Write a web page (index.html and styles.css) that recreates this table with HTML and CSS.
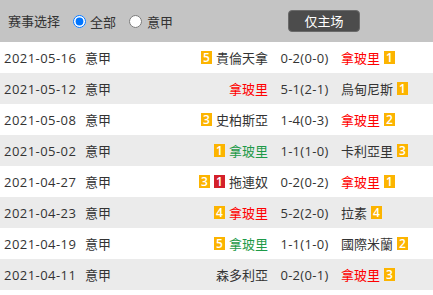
FILE: index.html
```html
<!DOCTYPE html>
<html>
<head>
<meta charset="utf-8">
<link rel="stylesheet" href="styles.css">
</head>
<body>
<div class="header">
  <span class="title">赛事选择</span>
  <input type="radio" name="lg" class="radio first" checked>
  <span class="opt">全部</span>
  <input type="radio" name="lg" class="radio">
  <span class="opt">意甲</span>
  <button class="btn">仅主场</button>
</div>
<div class="list">
  <div class="row">
    <span class="date">2021-05-16</span><span class="lg">意甲</span>
    <span class="home"><i class="b">5</i>貴倫天拿</span>
    <span class="score">0-2(0-0)</span>
    <span class="away"><em class="red">拿玻里</em><i class="b">1</i></span>
  </div>
  <div class="row alt">
    <span class="date">2021-05-12</span><span class="lg">意甲</span>
    <span class="home"><em class="red">拿玻里</em></span>
    <span class="score">5-1(2-1)</span>
    <span class="away">烏甸尼斯<i class="b">1</i></span>
  </div>
  <div class="row">
    <span class="date">2021-05-08</span><span class="lg">意甲</span>
    <span class="home"><i class="b">3</i>史柏斯亞</span>
    <span class="score">1-4(0-3)</span>
    <span class="away"><em class="red">拿玻里</em><i class="b">2</i></span>
  </div>
  <div class="row alt">
    <span class="date">2021-05-02</span><span class="lg">意甲</span>
    <span class="home"><i class="b">1</i><em class="green">拿玻里</em></span>
    <span class="score">1-1(1-0)</span>
    <span class="away">卡利亞里<i class="b">3</i></span>
  </div>
  <div class="row">
    <span class="date">2021-04-27</span><span class="lg">意甲</span>
    <span class="home"><i class="b">3</i><i class="b rc">1</i>拖連奴</span>
    <span class="score">0-2(0-2)</span>
    <span class="away"><em class="red">拿玻里</em><i class="b">1</i></span>
  </div>
  <div class="row alt">
    <span class="date">2021-04-23</span><span class="lg">意甲</span>
    <span class="home"><i class="b">4</i><em class="red">拿玻里</em></span>
    <span class="score">5-2(2-0)</span>
    <span class="away">拉素<i class="b">4</i></span>
  </div>
  <div class="row">
    <span class="date">2021-04-19</span><span class="lg">意甲</span>
    <span class="home"><i class="b">5</i><em class="green">拿玻里</em></span>
    <span class="score">1-1(1-0)</span>
    <span class="away">國際米蘭<i class="b">2</i></span>
  </div>
  <div class="row alt">
    <span class="date">2021-04-11</span><span class="lg">意甲</span>
    <span class="home">森多利亞</span>
    <span class="score">0-2(0-1)</span>
    <span class="away"><em class="red">拿玻里</em><i class="b">3</i></span>
  </div>
</div>
</body>
</html>
```
FILE: styles.css
```css
html, body {
  margin: 0;
  padding: 0;
  background: #fff;
}
body {
  font-family: "Open Sans", "Noto Sans CJK SC", sans-serif;
  font-size: 13px;
  color: #333;
}
.header {
  height: 42px;
  background: #c4c4c4;
  display: flex;
  align-items: center;
  padding-left: 8px;
  box-sizing: border-box;
}
.title {
  line-height: 1;
}
.radio {
  width: 13px;
  height: 13px;
  margin: 0 4px 0 13px;
}
.radio.first {
  margin-left: 13px;
}
.opt + .radio {
  margin-left: 13px;
  margin-right: 5px;
}
.btn {
  margin-left: 115px;
  width: 72px;
  height: 22px;
  background: #4c4c4c;
  border: 1px solid #6a6a6a;
  border-radius: 4px;
  color: #fff;
  font-family: "Noto Sans CJK SC", sans-serif;
  font-size: 13px;
  padding: 0;
  line-height: 20px;
}
.row {
  display: grid;
  grid-template-columns: 81px 40px 143px 73px 1fr;
  align-items: center;
  height: 31px;
  padding-left: 4px;
  white-space: nowrap;
}
.row.alt {
  background: #ebebeb;
}
.date {
  letter-spacing: 0.45px;
}
.home {
  display: flex;
  justify-content: flex-end;
  align-items: center;
}
.score {
  text-align: center;
  letter-spacing: 0.3px;
}
.away {
  display: flex;
  align-items: center;
}
em {
  font-style: normal;
}
.red {
  color: #f00;
}
.green {
  color: #1e9a48;
}
.b {
  font-style: normal;
  display: inline-block;
  width: 11px;
  height: 13px;
  line-height: 13px;
  background: #fcb400;
  color: #fff;
  font-size: 12px;
  font-weight: 600;
  text-align: center;
}
.home .b {
  margin-right: 4px;
}
.away .b {
  margin-left: 4px;
}
.b.rc {
  background: #d4202a;
}
```
